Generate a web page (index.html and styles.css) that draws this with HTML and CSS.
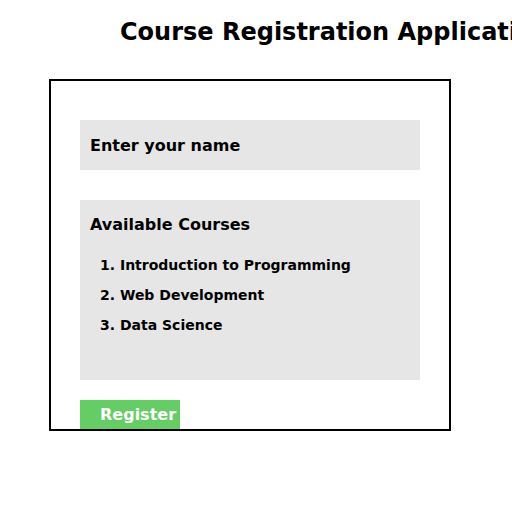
FILE: index.html
```html
<!DOCTYPE html>
<html>
<head>
<meta charset="utf-8">
<link rel="stylesheet" href="styles.css">
</head>
<body>
<h1 class="title">Course Registration Application</h1>
<div class="panel">
  <div class="name-field">Enter your name</div>
  <div class="courses">
    <div class="courses-title">Available Courses</div>
    <ol class="course-list">
      <li>1. Introduction to Programming</li>
      <li>2. Web Development</li>
      <li>3. Data Science</li>
    </ol>
  </div>
  <div class="register">Register</div>
</div>
</body>
</html>
```
FILE: styles.css
```css
html, body {
  margin: 0;
  padding: 0;
  background: #fff;
  width: 512px;
  height: 512px;
  overflow: hidden;
  font-family: "DejaVu Sans", sans-serif;
  font-weight: bold;
  color: #000;
}
.title {
  margin: 0;
  padding: 18px 0 0 120px;
  font-size: 24px;
  line-height: 28px;
  white-space: nowrap;
  overflow: hidden;
  height: 79px;
  box-sizing: border-box;
}
.panel {
  margin-left: 49px;
  width: 402px;
  height: 352px;
  box-sizing: border-box;
  border: 2px solid #000;
  padding: 39px 0 0 29px;
}
.name-field {
  width: 340px;
  height: 50px;
  background: #e6e6e6;
  display: flex;
  align-items: center;
  padding-left: 10px;
  box-sizing: border-box;
  font-size: 16px;
}
.courses {
  margin-top: 30px;
  width: 340px;
  height: 180px;
  background: #e6e6e6;
  box-sizing: border-box;
  padding: 15px 0 0 10px;
}
.courses-title {
  font-size: 16px;
  line-height: 20px;
}
.course-list {
  list-style: none;
  margin: 0;
  padding: 22px 0 0 10px;
  font-size: 14px;
}
.course-list li {
  line-height: 16px;
  margin-bottom: 14px;
}
.register {
  margin-top: 20px;
  width: 100px;
  height: 29px;
  background: #66cc66;
  color: #fff;
  font-size: 16px;
  line-height: 29px;
  padding-left: 20px;
  box-sizing: border-box;
  white-space: nowrap;
}
```
